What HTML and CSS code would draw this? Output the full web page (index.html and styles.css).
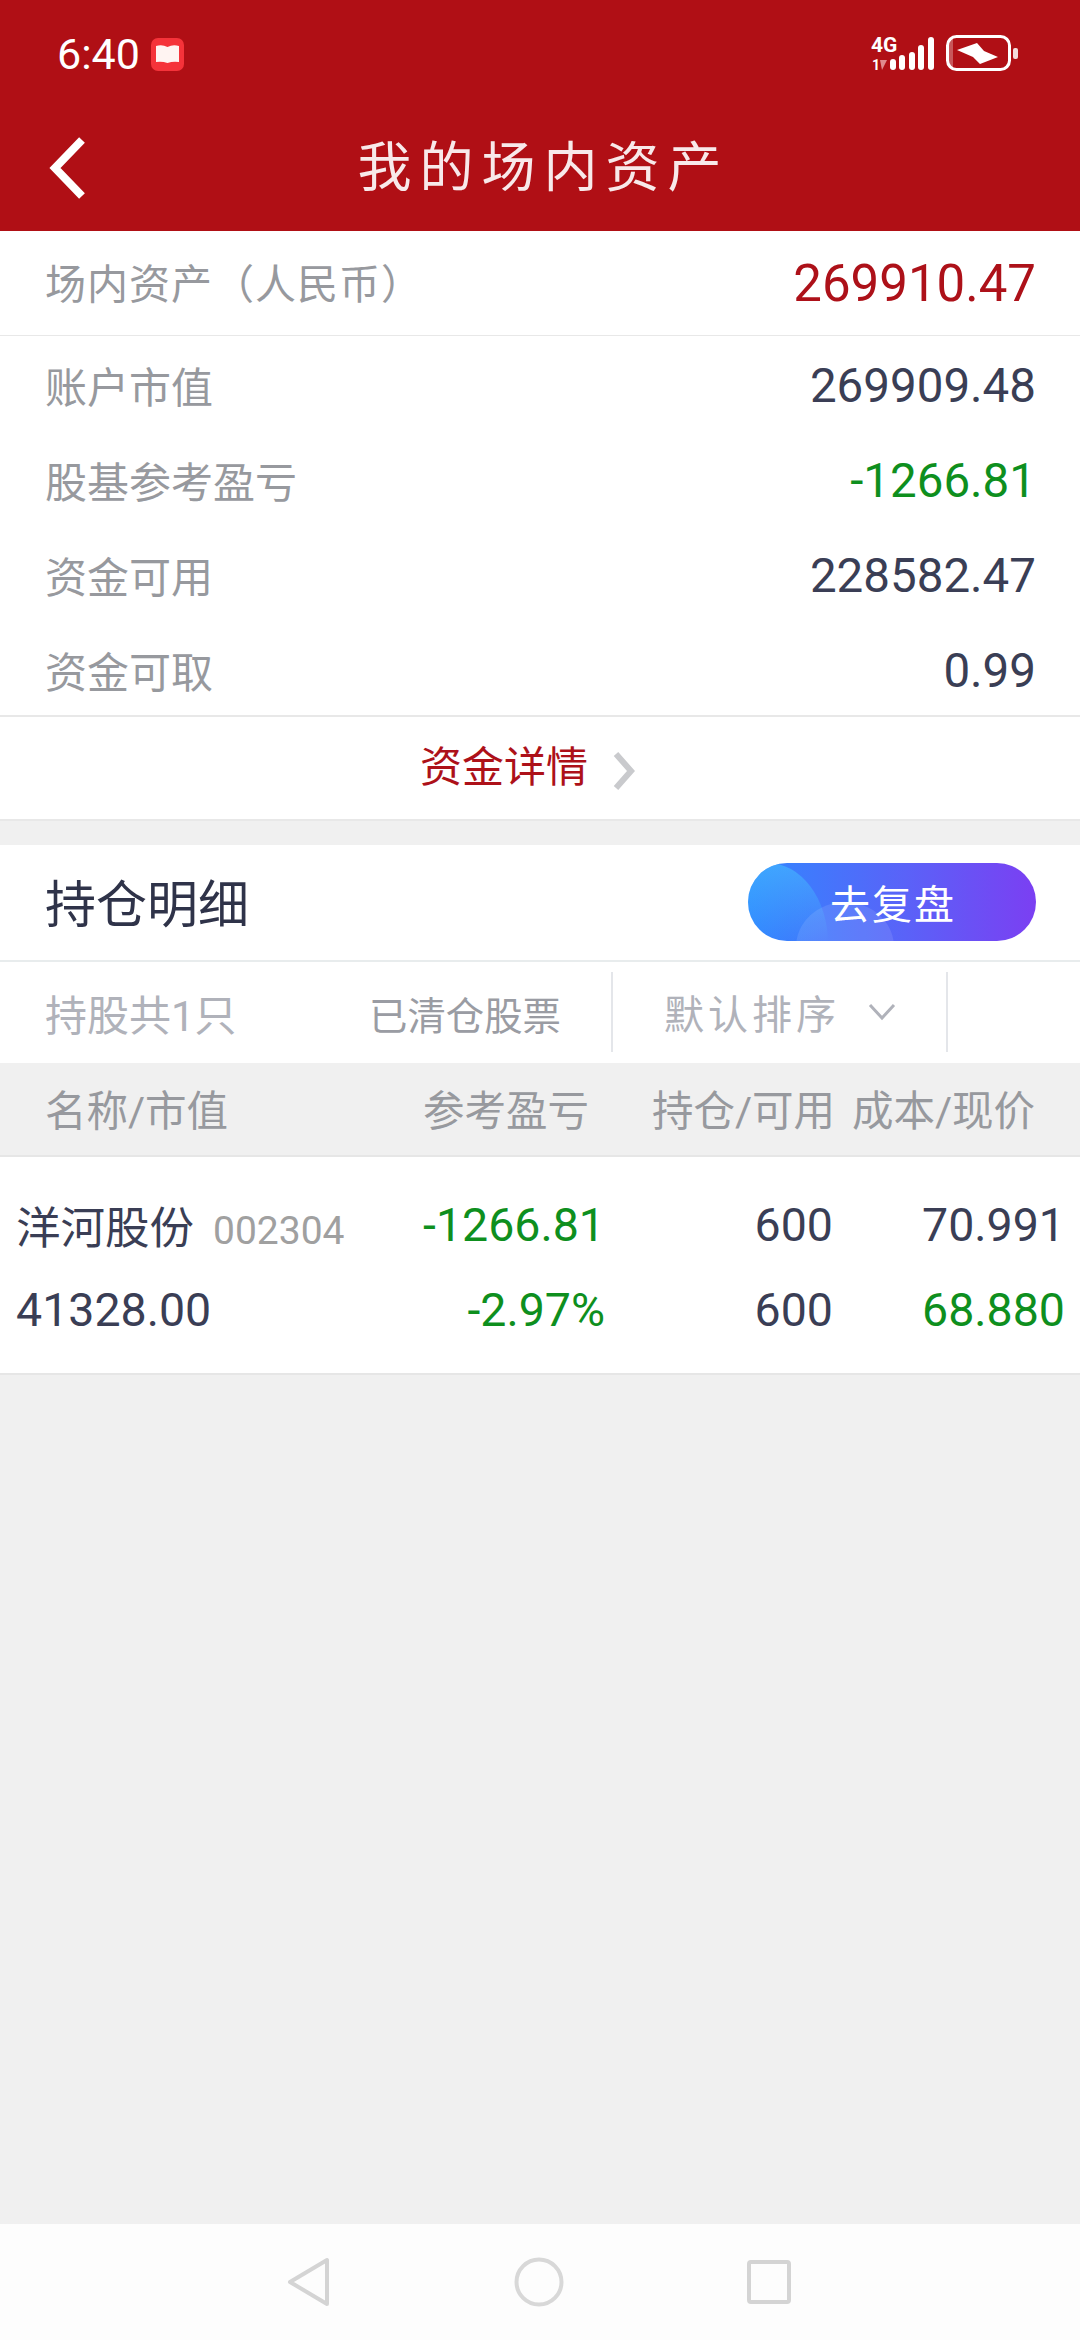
FILE: index.html
```html
<!DOCTYPE html>
<html lang="zh-CN">
<head>
<meta charset="utf-8">
<title>我的场内资产</title>
<link rel="stylesheet" href="styles.css">
</head>
<body>
<div class="app">
  <header class="top">
    <div class="status">
      <div class="status-left">
        <span class="time">6:40</span>
        <span class="app-badge">
          <svg width="33" height="33" viewBox="0 0 33 33"><rect width="33" height="33" rx="7" fill="#f5333a"/><path d="M5 8 Q11 6 16.500 9 Q22 6 28 8 V24 Q22 23 16.500 25 Q11 23 5 24Z" fill="#fff4f2"/></svg>
        </span>
      </div>
      <svg class="status-right" width="150" height="40" viewBox="0 0 150 40">
        <text x="0" y="18" class="net">4G</text>
        <text x="1" y="36" class="net-small">1</text>
        <path d="M9 26 H16 L11 36Z" fill="#e08a8d"/>
        <g fill="#fff">
          <rect x="19" y="25" width="6" height="11" rx="3"/>
          <rect x="28" y="21" width="6" height="15" rx="3"/>
          <rect x="38" y="18" width="6" height="18" rx="3"/>
          <rect x="47" y="11" width="6" height="25" rx="3"/>
          <rect x="57" y="3" width="6" height="33" rx="3"/>
        </g>
        <rect x="76.500" y="2.500" width="62" height="33" rx="9" fill="none" stroke="#fff" stroke-width="3"/>
        <rect x="78" y="5" width="4" height="28" fill="#fff" opacity=".3"/>
        <rect x="142" y="14" width="5" height="11" rx="2" fill="#fff" opacity=".85"/>
        <path d="M86 16 L106 9 L113 17 L127 23 L109 30 L102 23Z" fill="#fff"/>
      </svg>
    </div>
    <nav class="nav">
      <svg class="back" width="37" height="62" viewBox="0 0 37 62"><path d="M33 3 L6 31 L33 59" fill="none" stroke="#fff" stroke-width="8"/></svg>
      <h1 class="title">我的场内资产</h1>
    </nav>
  </header>

  <section class="summary">
    <div class="total">
      <span class="total-label">场内资产（人民币）</span>
      <span class="total-value">269910.47</span>
    </div>
    <div class="metrics">
      <div class="metric"><span class="metric-label">账户市值</span><span class="metric-value">269909.48</span></div>
      <div class="metric"><span class="metric-label">股基参考盈亏</span><span class="metric-value down">-1266.81</span></div>
      <div class="metric"><span class="metric-label">资金可用</span><span class="metric-value">228582.47</span></div>
      <div class="metric"><span class="metric-label">资金可取</span><span class="metric-value">0.99</span></div>
    </div>
    <div class="detail-link">
      <span class="detail-text">资金详情</span>
      <svg width="24" height="38" viewBox="0 0 24 38"><path d="M4 2 L19 19 L4 36" fill="none" stroke="#c9cacd" stroke-width="6"/></svg>
    </div>
  </section>

  <section class="holdings">
    <div class="holdings-head">
      <h2 class="holdings-title">持仓明细</h2>
      <button class="review">去复盘</button>
    </div>
    <div class="filters">
      <span class="count">持股共1只</span>
      <span class="cleared">已清仓股票</span>
      <div class="sort">
        <span class="sort-text">默认排序</span>
        <svg width="28" height="18" viewBox="0 0 28 18"><path d="M2 2 L14 15 L26 2" fill="none" stroke="#b0b2ba" stroke-width="3"/></svg>
      </div>
    </div>
    <div class="columns">
      <span>名称/市值</span>
      <span class="num">参考盈亏</span>
      <span class="num">持仓/可用</span>
      <span class="num">成本/现价</span>
    </div>
    <div class="stock">
      <div class="stock-line">
        <span class="stock-name">洋河股份<small class="stock-code">002304</small></span>
        <span class="num down">-1266.81</span>
        <span class="num">600</span>
        <span class="num">70.991</span>
      </div>
      <div class="stock-line">
        <span>41328.00</span>
        <span class="num down">-2.97%</span>
        <span class="num">600</span>
        <span class="num down">68.880</span>
      </div>
    </div>
  </section>

  <div class="spacer"></div>

  <footer class="softkeys">
    <svg width="46" height="52" viewBox="0 0 46 52"><path d="M41 4 V48 L4 26Z" fill="none" stroke="#d4d4d4" stroke-width="4" stroke-linejoin="round"/></svg>
    <svg width="50" height="50" viewBox="0 0 50 50"><circle cx="25" cy="25" r="22.500" fill="none" stroke="#d8d8d8" stroke-width="4"/></svg>
    <svg width="46" height="46" viewBox="0 0 46 46"><rect x="3" y="3" width="40" height="40" rx="2" fill="none" stroke="#d4d4d4" stroke-width="4"/></svg>
  </footer>
</div>
</body>
</html>
```

FILE: styles.css
```css
* { box-sizing: border-box; margin: 0; padding: 0; }

body {
  width: 1080px;
  height: 2340px;
  overflow: hidden;
  font-family: Roboto, "Noto Sans CJK SC", sans-serif;
  background: #f0f0f0;
}

.app {
  display: flex;
  flex-direction: column;
  height: 2340px;
}

/* Red header: status bar and title bar */
.top {
  height: 231px;
  background: #b00f15;
  color: #fff;
}

.status {
  height: 105px;
  padding: 34px 59px 0 57px;
  display: flex;
  justify-content: space-between;
  align-items: flex-start;
}

.status-left { display: flex; align-items: center; gap: 11px; }
.time { font-size: 43px; line-height: 40px; font-weight: 400; }
.app-badge { display: flex; }

.net { font: 700 21px Roboto, sans-serif; fill: #fff; }
.net-small { font: 700 14px Roboto, sans-serif; fill: #fff; }

.nav {
  height: 126px;
  padding-left: 49px;
  display: grid;
  grid-template-columns: 1fr auto 1fr;
  align-items: center;
}

.back { grid-column: 1; grid-row: 1; }

.title {
  font-size: 54px;
  font-weight: 400;
  letter-spacing: 8px;
  line-height: 76px;
  margin: 2px 0 0 -42px;
  color: #f8e9ea;
  grid-column: 2;
  grid-row: 1;
}

/* Asset summary */
.summary {
  background: #fff;
  border-bottom: 2px solid #e8e8e8;
}

.total {
  height: 105px;
  padding: 0 44px 0 45px;
  display: flex;
  justify-content: space-between;
  align-items: center;
  border-bottom: 1px solid #e8e8e8;
}

.total-label { font-size: 41px; color: #97999e; letter-spacing: 1px; margin-top: -4px; }
.total-value { font-size: 51px; color: #ad1119; }

.metrics {
  height: 381px;
  padding: 2px 44px 0 45px;
  border-bottom: 2px solid #e8e8e8;
  display: grid;
  grid-auto-rows: 95px;
}

.metric {
  display: flex;
  justify-content: space-between;
  align-items: center;
}

.metric-label { font-size: 42px; color: #97999e; margin-top: -3px; }
.metric-value { font-size: 47.500px; color: #3a3e55; }

.down { color: #0e8f1e; }

.detail-link {
  height: 102px;
  display: flex;
  justify-content: center;
  align-items: center;
  gap: 24px;
  padding-right: 24px;
}

.detail-text { font-size: 42px; color: #ad1119; margin-top: -10px; }
.detail-link svg { margin-top: 6px; }

/* Holdings */
.holdings {
  margin-top: 24px;
  background: #fff;
}

.holdings-head {
  height: 117px;
  padding: 0 44px 0 45px;
  display: flex;
  justify-content: space-between;
  align-items: center;
  border-bottom: 2px solid #e8eced;
}

.holdings-title { font-size: 51px; font-weight: 400; color: #2f3349; margin-top: -4px; }

.review {
  position: relative;
  overflow: hidden;
  width: 288px;
  height: 78px;
  margin-top: -2px;
  border: none;
  border-radius: 39px;
  background: linear-gradient(90deg, #3088ff 0%, #5a62f8 55%, #7b3ff2 100%);
  color: #fff;
  font: 400 40px Roboto, "Noto Sans CJK SC", sans-serif;
  letter-spacing: 2px;
  padding-left: 2px;
}

.review::before {
  content: "";
  position: absolute;
  left: -40px;
  top: 0;
  width: 120px;
  height: 160px;
  border-radius: 50%;
  background: linear-gradient(180deg, rgba(70, 190, 255, .6), rgba(70, 190, 255, 0) 50%);
}

.review::after {
  content: "";
  position: absolute;
  left: 48px;
  top: 39px;
  width: 98px;
  height: 90px;
  border-radius: 50%;
  background: rgba(255, 255, 255, .1);
}

.filters {
  height: 101px;
  padding-left: 45px;
  display: flex;
  align-items: center;
}

.count { width: 324px; font-size: 42px; color: #b0b2ba; }
.cleared { width: 242px; font-size: 38.400px; color: #9a9ca3; }

.sort {
  width: 337px;
  height: 80px;
  margin-top: -2px;
  padding-left: 51px;
  border-left: 2px solid #e4e6ea;
  border-right: 2px solid #e4e6ea;
  display: flex;
  align-items: center;
  gap: 28px;
}

.sort-text { font-size: 40px; letter-spacing: 4px; color: #b0b2ba; }

.columns {
  height: 94px;
  padding-left: 45px;
  background: #f0f0f0;
  border-bottom: 2px solid #e6e6e6;
  display: grid;
  grid-template-columns: 264px 280px 246px 200px;
  align-items: center;
  font-size: 41.500px;
  color: #97999e;
}

.columns span { margin-top: -2px; }

.num { text-align: right; }

.stock {
  height: 218px;
  padding: 25px 0 0 16px;
  background: #fff;
  border-bottom: 2px solid #e6e6e6;
}

.stock-line {
  height: 85px;
  display: grid;
  grid-template-columns: 290px 299px 228px 232px;
  align-items: center;
  font-size: 46.500px;
  color: #3a3e55;
}

.stock-name { font-size: 44.500px; white-space: nowrap; }
.stock-code { font-size: 39px; color: #a0a0a0; margin-left: 19px; }

.spacer { flex: 1; }

/* Android soft keys */
.softkeys {
  height: 116px;
  padding: 0 288px 0 286px;
  background: #fdfdfd;
  display: flex;
  justify-content: space-between;
  align-items: center;
}
```
